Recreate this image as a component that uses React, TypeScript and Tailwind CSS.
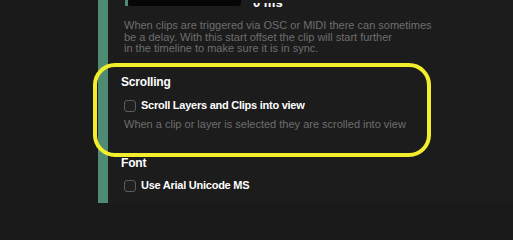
import React from "react";

const Checkbox: React.FC = () => (
  <span className="inline-block w-[12px] h-[12px] rounded-[3px] border border-[#5a5a5a] bg-[#202020] shrink-0" />
);

export default function App() {
  return (
    <div className="min-h-screen bg-[#1a1a1a]">
      <div
        className="relative w-[513px] h-[203px] overflow-hidden flex bg-[#1a1a1a]"
        style={{ fontFamily: '"Liberation Sans", Arial, sans-serif' }}
      >
        <div className="w-[98px] shrink-0 bg-[#1a1a1a]" />
        <div className="w-[10px] shrink-0 bg-[#4f8a72]" />
        <div className="flex-1 bg-[#1c1c1c] pl-[16px]">
          {/* start offset field, scrolled mostly out of view */}
          <div className="flex items-end h-[6px]">
            <div className="w-[3px] h-[6px] bg-[#4f8a72] ml-[1px]" />
            <div className="w-[113px] h-[6px] bg-[#060606] rounded-b-[3px]" />
            <div className="ml-[12px] text-[13px] font-bold text-white leading-[13px] -mb-[3px] h-[6px] overflow-hidden flex items-end">
              <span>0 ms</span>
            </div>
          </div>
          <p className="mt-[14px] text-[11px] leading-[11.5px] text-[#6e6e6e] w-[320px]">
            When clips are triggered via OSC or MIDI there can sometimes
            <br />
            be a delay. With this start offset the clip will start further
            <br />
            in the timeline to make sure it is in sync.
          </p>

          <h3 className="mt-[19px] -ml-[3px] text-[12px] leading-[16px] font-bold tracking-[-0.2px] text-white">Scrolling</h3>
          <label className="mt-[9px] flex items-center gap-[5px] h-[14px]">
            <Checkbox />
            <span className="text-[11px] font-bold tracking-[-0.25px] text-white">Scroll Layers and Clips into view</span>
          </label>
          <p className="mt-[5px] text-[11px] leading-[12px] text-[#6e6e6e]">
            When a clip or layer is selected they are scrolled into view
          </p>

          <h3 className="mt-[25px] -ml-[3px] text-[12px] leading-[16px] font-bold tracking-[-0.2px] text-white">Font</h3>
          <label className="mt-[8px] flex items-center gap-[5px] h-[14px]">
            <Checkbox />
            <span className="text-[11px] font-bold tracking-[-0.25px] text-white">Use Arial Unicode MS</span>
          </label>
          <p className="mt-[8px] text-[11px] leading-[12px] text-[#6e6e6e] whitespace-nowrap">
            If you are experiencing trouble with non-latin characters, enable this
          </p>
        </div>

        {/* highlight annotation */}
        <div className="absolute left-[93px] top-[63px] w-[338px] h-[94px] border-[4px] border-[#f3ee2c] rounded-[22px] pointer-events-none" />
      </div>
    </div>
  );
}
